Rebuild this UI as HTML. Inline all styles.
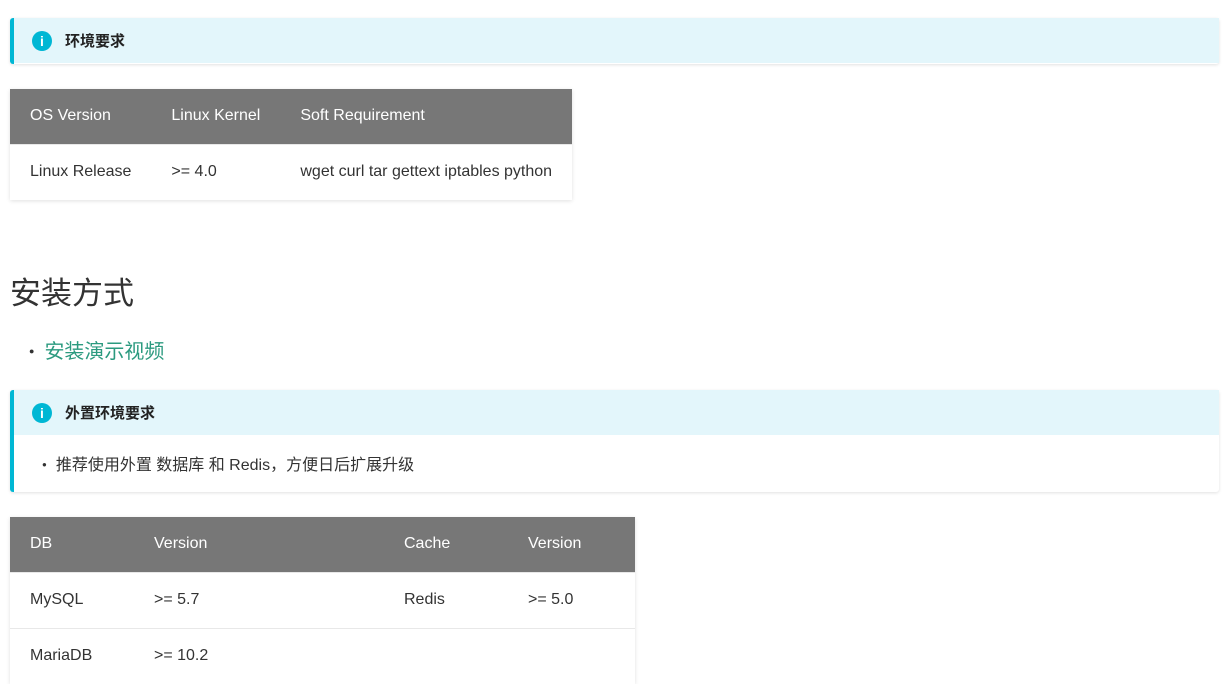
<!DOCTYPE html>
<html><head><meta charset="utf-8"><style>
body{margin:0;background:#fff;font-family:"Liberation Sans","Noto Sans CJK SC",sans-serif;color:#333;width:1232px;height:680px;overflow:hidden;position:relative}
.adm{position:absolute;left:10px;width:1209px;border-left:4px solid #00b7d4;border-radius:3px;box-shadow:0 1px 3px rgba(0,0,0,.12);box-sizing:border-box;background:#fff}
.adm .t{background:#e3f6fb;height:45px;display:flex;align-items:center;font-size:15px;font-weight:bold;color:#222}
.ic{width:20px;height:20px;border-radius:50%;background:#00b7d4;color:#fff;font-size:14px;font-weight:bold;display:inline-flex;align-items:center;justify-content:center;margin:0 13px 0 18px;font-family:"Liberation Sans",sans-serif}
table{position:absolute;left:10px;border-collapse:collapse;box-shadow:0 1px 4px rgba(0,0,0,.12);font-size:16px;white-space:nowrap}
th{background:#777;color:#fff;font-weight:normal;text-align:left;height:55px;padding:0 20px;box-sizing:border-box}
td{height:56px;padding:0 20px;border-top:1px solid #e8e8e8;color:#333;box-sizing:border-box}
h2{position:absolute;left:10px;top:268px;margin:0;font-weight:normal;font-size:31px;color:#333}
</style></head><body>
<div class="adm" style="top:18px;height:46px"><div class="t"><span class="ic">i</span>环境要求</div></div>
<table style="top:89px;width:562px"><tr><th style="width:141px">OS Version</th><th style="width:129px">Linux Kernel</th><th>Soft Requirement</th></tr>
<tr><td>Linux Release</td><td>&gt;= 4.0</td><td>wget curl tar gettext iptables python</td></tr></table>
<h2>安装方式</h2>
<div style="position:absolute;left:29px;top:335px;font-size:20px;color:#2b9a7f"><span style="color:#333;font-size:9px;margin-right:10px;vertical-align:4px">●</span>安装演示视频</div>
<div class="adm" style="top:390px;height:102px"><div class="t"><span class="ic">i</span>外置环境要求</div>
<div style="padding:16px 0 0 28px;font-size:16px;color:#333"><span style="font-size:8px;margin-right:9px;vertical-align:3px">●</span>推荐使用外置 数据库 和 Redis，方便日后扩展升级</div></div>
<table style="top:517px;width:625px"><tr><th style="width:124px">DB</th><th style="width:250px">Version</th><th style="width:124px">Cache</th><th>Version</th></tr>
<tr><td>MySQL</td><td>&gt;= 5.7</td><td>Redis</td><td>&gt;= 5.0</td></tr>
<tr><td>MariaDB</td><td>&gt;= 10.2</td><td></td><td></td></tr></table>
</body></html>
